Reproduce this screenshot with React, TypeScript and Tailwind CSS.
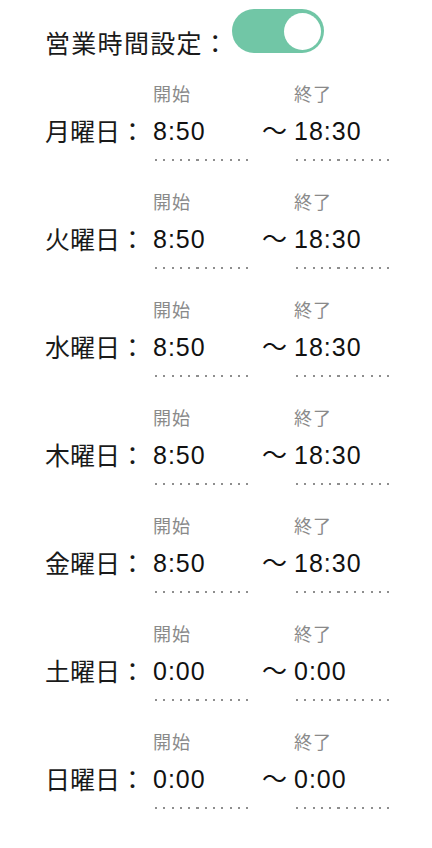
import { useState } from "react";

type Day = { label: string; start: string; end: string };

const DAYS: Day[] = [
  { label: "月曜日", start: "8:50", end: "18:30" },
  { label: "火曜日", start: "8:50", end: "18:30" },
  { label: "水曜日", start: "8:50", end: "18:30" },
  { label: "木曜日", start: "8:50", end: "18:30" },
  { label: "金曜日", start: "8:50", end: "18:30" },
  { label: "土曜日", start: "0:00", end: "0:00" },
  { label: "日曜日", start: "0:00", end: "0:00" },
];

const FONT = "font-['Liberation_Sans','Noto_Sans_CJK_JP',sans-serif]";

function TimeField({ caption, value }: { caption: string; value: string }) {
  return (
    <div className="w-[99px] flex flex-col">
      <span className="text-[18px] leading-[20px] tracking-[1px] text-[#8a8a8a]">{caption}</span>
      <span className="mt-[11px] text-[25px] leading-[30px] tracking-[1px] text-[#111]">{value}</span>
      {/* dotted underline */}
      <div className="mt-[13px] h-[2px] w-[99px] bg-[repeating-linear-gradient(to_right,#8e8e8e_0_2px,transparent_2px_8.3px)] bg-[position:2px_0]" />
    </div>
  );
}

export default function App() {
  const [enabled, setEnabled] = useState(true);

  return (
    <div className={`${FONT} min-h-[848px] w-[432px] bg-white pl-[45px]`}>
      {/* Header */}
      <div className="flex items-start">
        <span className="mt-[29px] text-[25px] leading-[30px] tracking-[1.3px] text-[#1a1a1a]">営業時間設定：</span>
        <button
          onClick={() => setEnabled(!enabled)}
          className={`ml-[3px] mt-[9px] flex h-[44px] w-[92px] items-center rounded-full px-[3px] ${
            enabled ? "justify-end bg-[#71c6a6]" : "justify-start bg-[#d9d9d9]"
          }`}
        >
          <span className="h-[37px] w-[37px] rounded-full bg-white" />
        </button>
      </div>

      {/* Days */}
      <div className="mt-[26px] flex flex-col gap-[32px]">
        {DAYS.map((d) => (
          <div key={d.label} className="flex">
            <div className="w-[108px] pt-[32px] text-[25px] leading-[30px] text-[#1a1a1a]">{d.label}：</div>
            <TimeField caption="開始" value={d.start} />
            <div className="ml-[10px] w-[25px] pt-[31px] text-[25px] leading-[30px] text-[#111]">〜</div>
            <div className="ml-[7px]">
              <TimeField caption="終了" value={d.end} />
            </div>
          </div>
        ))}
      </div>
    </div>
  );
}
